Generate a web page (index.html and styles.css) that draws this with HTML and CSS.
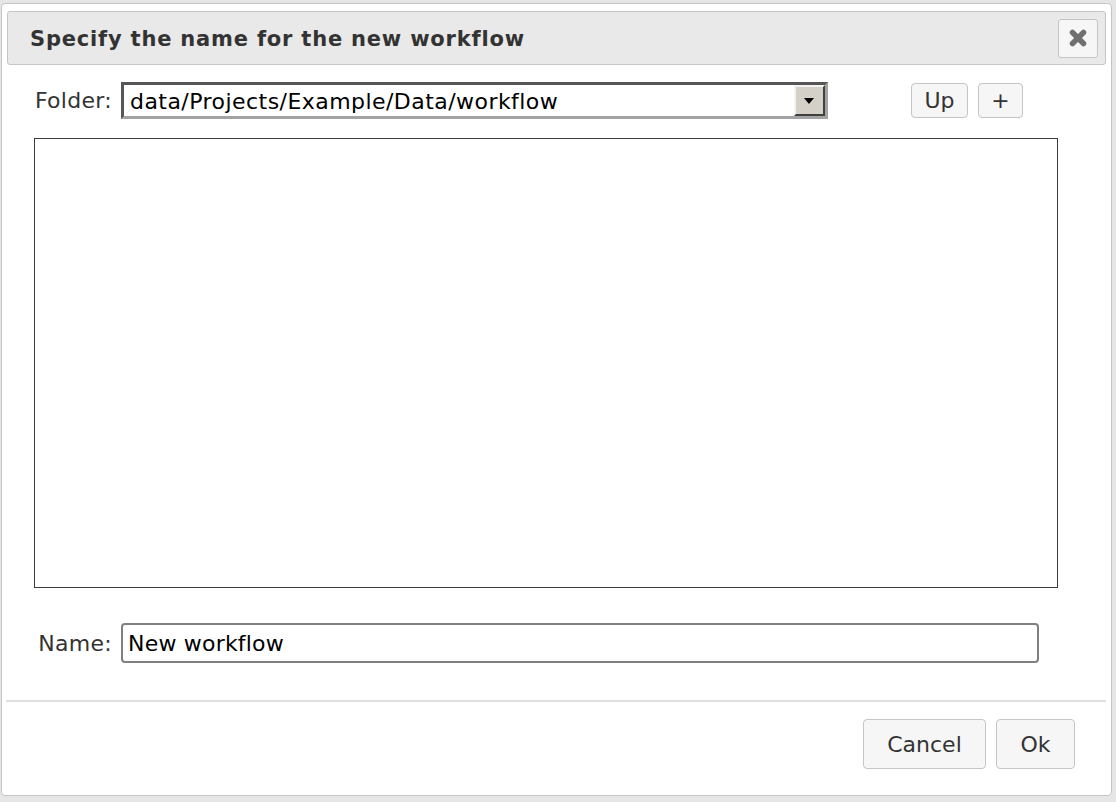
FILE: index.html
```html
<!DOCTYPE html>
<html lang="en">
<head>
<meta charset="utf-8">
<title>Specify the name for the new workflow</title>
<link rel="stylesheet" href="styles.css">
</head>
<body>
<div class="dialog">
  <div class="titlebar">
    <span class="title">Specify the name for the new workflow</span>
    <button class="close" type="button" aria-label="Close">
      <svg width="22" height="22" viewBox="0 0 22 22"><path d="M5.5 5.5 L16.5 16.5 M16.5 5.5 L5.5 16.5" stroke="#707070" stroke-width="5.5" stroke-linecap="round" fill="none"/></svg>
    </button>
  </div>
  <div class="content">
    <div class="row folder-row">
      <span class="lbl">Folder:</span>
      <div class="select">
        <span class="select-text">data/Projects/Example/Data/workflow</span>
        <span class="select-arrow"><span class="tri"></span></span>
      </div>
      <div class="nav-btns">
        <button class="btn btn-up" type="button">Up</button>
        <button class="btn btn-plus" type="button">+</button>
      </div>
    </div>
    <div class="listbox"></div>
    <div class="row name-row">
      <span class="lbl">Name:</span>
      <div class="textinput">New workflow</div>
    </div>
  </div>
  <div class="separator"></div>
  <div class="buttonpane">
    <button class="btn btn-cancel" type="button">Cancel</button>
    <button class="btn btn-ok" type="button">Ok</button>
  </div>
</div>
</body>
</html>
```
FILE: styles.css
```css
html, body {
  margin: 0;
  padding: 0;
}
body {
  background: #e6e6e6;
  font-family: "DejaVu Sans", Verdana, sans-serif;
  font-size: 22px;
  color: #333;
  width: 1116px;
  height: 802px;
  overflow: hidden;
}
.dialog {
  box-sizing: border-box;
  margin: 3px 0 0 1px;
  width: 1111px;
  height: 793px;
  background: #fff;
  border: 1px solid #c5c5c5;
  border-radius: 4px;
  display: flex;
  flex-direction: column;
}
.titlebar {
  box-sizing: border-box;
  margin: 7px 5px 0 5px;
  height: 54px;
  background: #e9e9e9;
  border: 1px solid #c5c5c5;
  border-radius: 3px;
  display: flex;
  align-items: center;
  justify-content: space-between;
  padding: 0 7px 0 22px;
}
.title {
  font-weight: bold;
  font-size: 21px;
  letter-spacing: 0.8px;
  color: #333;
  padding-top: 2px;
}
.close {
  box-sizing: border-box;
  width: 40px;
  height: 39px;
  padding: 0;
  margin: 0;
  background: #f6f6f6;
  border: 1px solid #c5c5c5;
  border-radius: 3px;
  display: flex;
  align-items: center;
  justify-content: center;
}
.close svg { display: block; }
.content {
  display: flex;
  flex-direction: column;
}
.row {
  display: flex;
  align-items: center;
}
.lbl {
  box-sizing: border-box;
  width: 119px;
  text-align: right;
  padding-right: 9px;
  color: #333;
  letter-spacing: 0.3px;
}
.folder-row {
  margin-top: 17px;
  height: 37px;
}
.select {
  box-sizing: border-box;
  width: 707px;
  height: 37px;
  border-style: solid;
  border-width: 3px;
  border-color: #565656 #a3a3a3 #a3a3a3 #565656;
  background: #fff;
  display: flex;
  align-items: stretch;
}
.select-text {
  flex: 1;
  color: #000;
  padding-left: 6px;
  letter-spacing: 0.45px;
  line-height: 33px;
  white-space: nowrap;
}
.select-arrow {
  box-sizing: border-box;
  width: 31px;
  border-style: solid;
  border-width: 2px;
  border-color: #f4f2ee #404040 #404040 #f4f2ee;
  background: #d4d0c8;
  display: flex;
  align-items: center;
  justify-content: center;
}
.tri {
  width: 0;
  height: 0;
  border-left: 5px solid transparent;
  border-right: 5px solid transparent;
  border-top: 6px solid #000;
  margin-right: 2px;
}
.nav-btns {
  display: flex;
  gap: 10px;
  margin-left: 83px;
}
.btn {
  box-sizing: border-box;
  margin: 0;
  padding: 0;
  font-family: "DejaVu Sans", Verdana, sans-serif;
  font-size: 22px;
  color: #333;
  background: #f6f6f6;
  border: 1px solid #c5c5c5;
  border-radius: 4px;
}
.btn-up {
  width: 57px;
  height: 35px;
}
.btn-plus {
  width: 45px;
  height: 35px;
}
.listbox {
  box-sizing: border-box;
  margin: 19px 0 0 32px;
  width: 1024px;
  height: 450px;
  border: 1px solid #3c3c3c;
  background: #fff;
}
.name-row {
  margin-top: 35px;
  height: 40px;
}
.textinput {
  box-sizing: border-box;
  width: 918px;
  height: 40px;
  border: 2px solid #808080;
  border-radius: 4px;
  padding-left: 5px;
  color: #000;
  line-height: 38px;
  letter-spacing: 0.2px;
}
.separator {
  margin: 37px 0 0 4px;
  width: 1100px;
  height: 2px;
  background: #e0e0e0;
}
.buttonpane {
  display: flex;
  justify-content: flex-end;
  gap: 10px;
  margin-top: 17px;
  padding-right: 36px;
}
.btn-cancel {
  width: 123px;
  height: 50px;
}
.btn-ok {
  width: 79px;
  height: 50px;
}
```
